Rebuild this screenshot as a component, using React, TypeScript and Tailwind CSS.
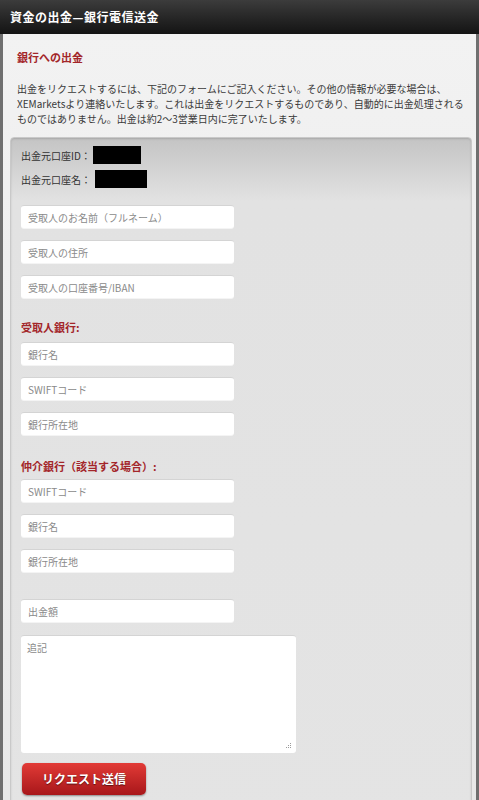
const jp = { fontFamily: '"Noto Sans CJK JP", "Noto Sans", Arial, sans-serif' };

function Field({ placeholder }: { placeholder: string }) {
  return (
    <div className="flex h-[23px] w-[213px] items-center rounded-[3px] border-t border-[#d4d4d4] bg-white pl-[7px] text-[10px] text-[#8a8a8a] shadow-[0_1px_0_#f4f4f4]">
      {placeholder}
    </div>
  );
}

function Heading({ children }: { children: React.ReactNode }) {
  return <h3 className="text-[11px] font-bold leading-none text-[#a3262a]">{children}</h3>;
}

export default function App() {
  return (
    <div style={jp} className="h-[800px] w-[479px] overflow-hidden bg-[#e6e6e6]">
      <div className="flex h-[34px] items-center bg-gradient-to-b from-[#3c3c3c] to-[#141414] pl-[10px]">
        <h1 className="text-[12px] font-bold tracking-[0.5px] text-white">資金の出金—銀行電信送金</h1>
      </div>

      <div className="h-[766px] border-x-[3px] border-[#6f6f6f] bg-gradient-to-b from-[#f2f2f2] to-[#e8e8e8] pr-[4px] pl-[7px]">
        <div className="px-[7px] pt-[18px]">
          <h2 className="text-[11px] font-bold leading-none text-[#a3262a]">銀行への出金</h2>
          <p className="mt-[18px] text-[10px] leading-[15px] text-[#3a3a3a]">
            出金をリクエストするには、下記のフォームにご記入ください。その他の情報が必要な場合は、
            <br />
            XEMarketsより連絡いたします。これは出金をリクエストするものであり、自動的に出金処理される
            <br />
            ものではありません。出金は約2～3営業日内に完了いたします。
          </p>
        </div>

        <div className="mt-[11px] h-[700px] rounded-t-[4px] border border-[#c9c9c9] bg-gradient-to-b from-[#c4c4c4] via-[#e2e2e2] via-[9%] to-[#e4e4e4] pl-[10px] shadow-[inset_0_1px_2px_rgba(0,0,0,0.15)]">
          <div className="flex flex-col gap-[6px] pt-[8px] text-[10px] text-[#333]">
            <div className="flex h-[18px] items-center">
              出金元口座ID：
              <span className="ml-[2px] h-[18px] w-[48px] bg-black" />
            </div>
            <div className="flex h-[18px] items-center">
              出金元口座名：
              <span className="ml-[4px] h-[18px] w-[52px] bg-black" />
            </div>
          </div>

          <div className="mt-[17px] flex flex-col gap-[12px]">
            <Field placeholder="受取人のお名前（フルネーム）" />
            <Field placeholder="受取人の住所" />
            <Field placeholder="受取人の口座番号/IBAN" />
          </div>

          <div className="mt-[24px]">
            <Heading>受取人銀行:</Heading>
          </div>
          <div className="mt-[9px] flex flex-col gap-[12px]">
            <Field placeholder="銀行名" />
            <Field placeholder="SWIFTコード" />
            <Field placeholder="銀行所在地" />
          </div>

          <div className="mt-[26px]">
            <Heading>仲介銀行（該当する場合）:</Heading>
          </div>
          <div className="mt-[7px] flex flex-col gap-[12px]">
            <Field placeholder="SWIFTコード" />
            <Field placeholder="銀行名" />
            <Field placeholder="銀行所在地" />
          </div>

          <div className="mt-[27px]">
            <Field placeholder="出金額" />
          </div>

          <div className="relative mt-[13px] h-[118px] w-[275px] rounded-[3px] border-t border-[#d4d4d4] bg-white px-[6px] pt-[4px] text-[10px] text-[#8a8a8a]">
            追記
            <svg className="absolute right-[4px] bottom-[4px]" width="7" height="7" viewBox="0 0 7 7">
              <g fill="#9a9a9a">
                <rect x="5" y="1" width="1" height="1" />
                <rect x="3" y="3" width="1" height="1" />
                <rect x="5" y="3" width="1" height="1" />
                <rect x="1" y="5" width="1" height="1" />
                <rect x="3" y="5" width="1" height="1" />
                <rect x="5" y="5" width="1" height="1" />
              </g>
            </svg>
          </div>

          <button className="mt-[10px] ml-[1px] flex h-[32px] w-[124px] items-center justify-center rounded-[5px] bg-gradient-to-b from-[#e23a36] to-[#a8161a] text-[12px] font-bold text-white shadow-[0_1px_2px_rgba(0,0,0,0.4)] [text-shadow:0_1px_1px_rgba(0,0,0,0.5)]">
            リクエスト送信
          </button>
        </div>
      </div>
    </div>
  );
}
